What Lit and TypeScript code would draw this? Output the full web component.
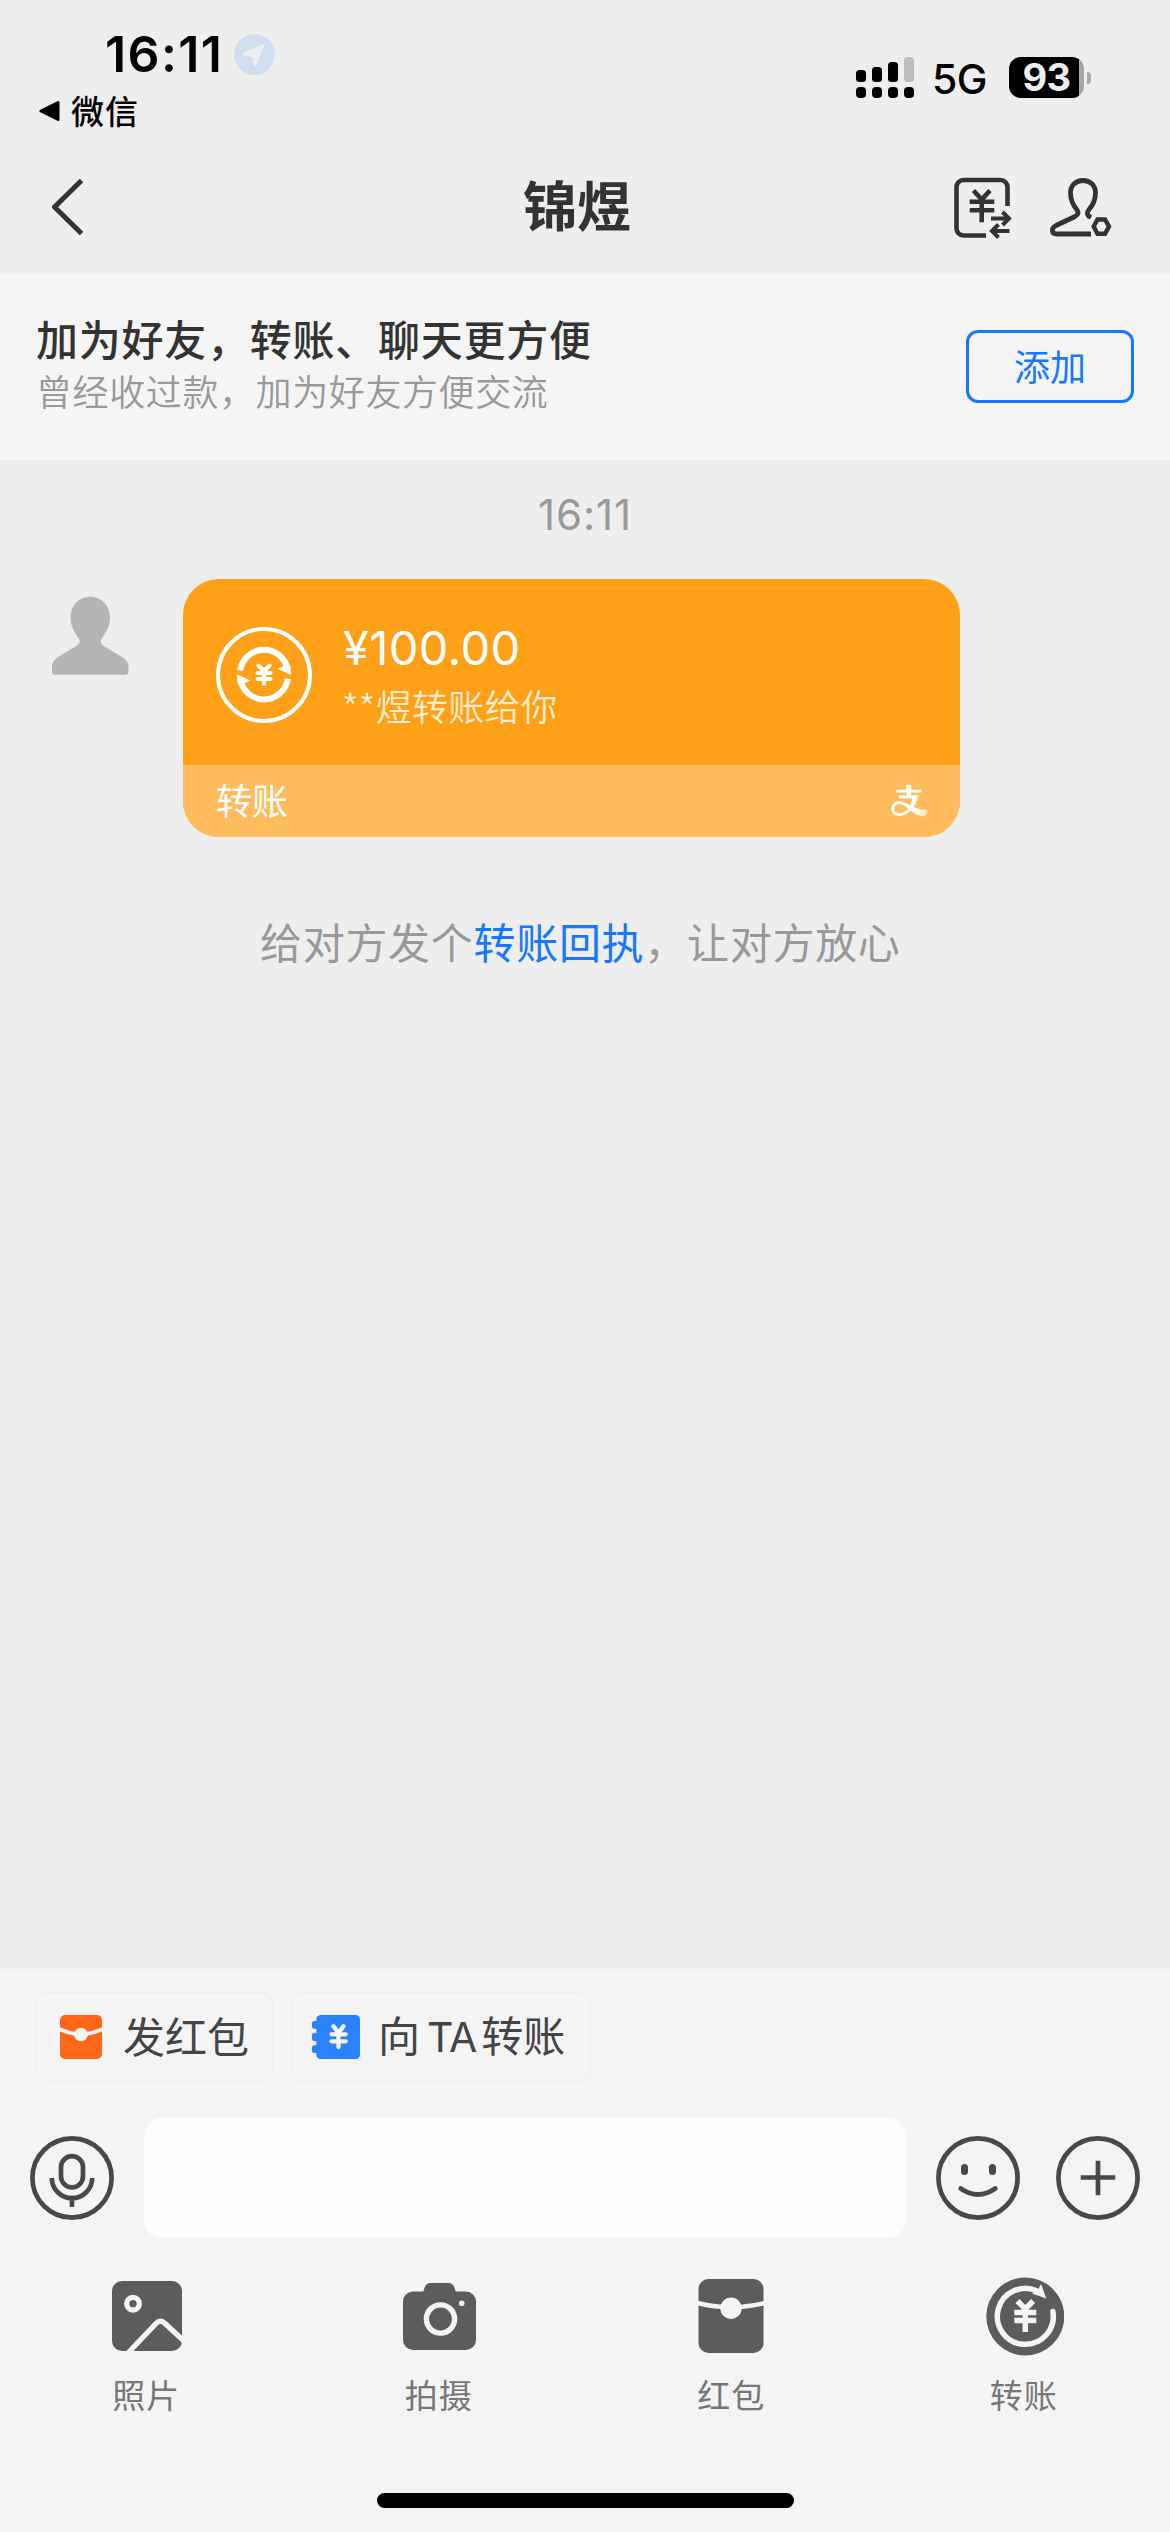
import { LitElement, html, css, svg } from "lit";
import { customElement } from "lit/decorators.js";

const billIcon = html`<svg width="62" height="64" viewBox="0 0 62 64" fill="none" stroke="#333" stroke-width="4.6">
  <path d="M55.5 31V12a7 7 0 0 0-7-7H11.5a7 7 0 0 0-7 7v41.500a7 7 0 0 0 7 7H34" />
  <path d="M21.500 15.500L29.700 24.500L38 15.500M17.700 26.700H42.300M17.700 35.300H42.300M29.700 24V47.300" />
  <path d="M39 43.500H57.500M50.500 37L57 43.500L50.500 50M57.500 56H40M46.500 49.500L40 56L46.500 62.500" stroke-width="4" />
</svg>`;

const userIcon = html`<svg width="66" height="64" viewBox="0 0 66 64" fill="none" stroke="#333" stroke-width="4.8">
  <path d="M43 42.500C38.500 40 38.500 37.500 41 34.500C45 30 47.500 26 47.500 18C47.500 10 42 5.500 35 5.500S22.500 10 22.500 18C22.500 26 25 30 28.700 34.500C31 37.500 30.500 39.500 27 41.500L8 50.500C2.500 53.500 3.500 59 9 59H43" />
  <path d="M45.700 51.500L49.500 44.500H57L61 51.500L57 58.800H49.500Z" stroke-width="4.400" />
</svg>`;

const micIcon = html`<svg width="84" height="84" viewBox="0 0 84 84" fill="none" stroke="#484848" stroke-width="4.700">
  <circle cx="42" cy="42" r="39.600" />
  <rect x="31" y="20.100" width="22" height="31.200" rx="11" />
  <path d="M21.800 42A20.200 20.200 0 0 0 62.200 42M42 62V71" />
</svg>`;

const smileIcon = html`<svg width="84" height="84" viewBox="0 0 84 84" fill="none" stroke="#484848" stroke-width="4.700">
  <circle cx="42" cy="42" r="39.600" />
  <path d="M28.500 31.500V35.500M56.500 31.500V35.500" stroke-width="7" stroke-linecap="round" />
  <path d="M24.700 52.500Q42 64.500 59.300 52.500" stroke-linecap="round" />
</svg>`;

const plusIcon = html`<svg width="84" height="84" viewBox="0 0 84 84" fill="none" stroke="#484848" stroke-width="4.700">
  <circle cx="42" cy="42" r="39.600" />
  <path d="M42 24.700V59.300M24.700 41.500H59.300" />
</svg>`;

const packetChip = html`<svg width="42" height="44" viewBox="0 0 42 44">
  <rect width="42" height="44" rx="5" fill="#ff6618" />
  <path d="M-2 13.500Q10 19 21 19.300Q32 19 44 13.500" fill="none" stroke="#f4f4f4" stroke-width="4" />
  <circle cx="21" cy="19.500" r="6.800" fill="#f4f4f4" />
</svg>`;

const ledgerChip = html`<svg width="48" height="44" viewBox="0 0 48 44">
  <rect x="4.300" width="43.700" height="44" rx="4.500" fill="#2a82ff" />
  <g fill="#2a82ff">
    <rect y="6" width="9" height="7.700" rx="2" /><rect y="18" width="9" height="8" rx="2" /><rect y="30.300" width="9" height="7.700" rx="2" />
  </g>
  <path d="M21.500 11.300L26.500 18L31.500 11.300M19.500 19.300H33.700M19.500 26.300H33.700M26.500 18V32" fill="none" stroke="#f4f4f4" stroke-width="4.300" stroke-linecap="round" />
</svg>`;

const cycleHalf = svg`<path d="M24.200 43.500A24 24 0 0 1 71.500 42" stroke-width="6"/>
  <path d="M74.500 39L75 48L61.500 41.800L70 38Z" fill="#fff" stroke="none"/>`;
const cycleOther = svg`<path d="M24.200 43.500A24 24 0 0 1 71.500 42" stroke-width="6"/>
  <path d="M74.500 39L75 48L61.500 41.800L70 38Z" fill="#fff" stroke="none"/>`;

const tools = [
  {
    label: "照片",
    art: svg`<rect x="6" y="5" width="70" height="70" rx="10" fill="#5c5c5c"/>
      <g fill="none" stroke="#f4f4f4" stroke-width="5.300"><circle cx="27" cy="27.700" r="6.300"/>
      <path d="M21 78L50 47.500Q54 43.300 58.500 47L79 66"/></g>`,
  },
  {
    label: "拍摄",
    art: svg`<rect x="4" y="15.500" width="73" height="58.500" rx="10" fill="#5c5c5c"/>
      <path d="M23 17Q24.500 16 25 13.500Q26.500 7 31.500 7H50Q54.500 7 56 13.500Q56.500 16 58 17Z" fill="#5c5c5c"/>
      <circle cx="41.500" cy="43" r="14.100" fill="none" stroke="#f4f4f4" stroke-width="5.400"/>
      <circle cx="62.700" cy="27.300" r="2.800" fill="#f4f4f4"/>`,
  },
  {
    label: "红包",
    art: svg`<rect x="7.500" y="3" width="65" height="74" rx="10" fill="#5c5c5c"/>
      <path d="M6 27Q18 30 31 31Q40 32 49 31Q62 30 74 27" fill="none" stroke="#f4f4f4" stroke-width="4.500"/>
      <circle cx="40" cy="32.300" r="10.700" fill="#f4f4f4"/>`,
  },
  {
    label: "转账",
    art: svg`<circle cx="41.300" cy="40.500" r="39" fill="#5c5c5c"/>
      <g fill="none" stroke="#f4f4f4" stroke-width="5.500">
      <path d="M68.900 35.500A28 28 0 1 1 54 15.400" stroke-linecap="round"/>
      <path d="M33.500 25L41.300 33L49.100 25M30.300 36.500H52.300M30.300 44.500H52.300M41.300 32V56"/></g>
      <path d="M57 8L62.300 22.500L48 17.500L54 14Z" fill="#f4f4f4"/>`,
  },
];

@customElement("app-root")
export class AppRoot extends LitElement {
  static styles = css`
    :host {
      display: block;
    }
    * {
      box-sizing: border-box;
    }
    svg {
      display: block;
      flex: none;
    }
    .page {
      width: 1170px;
      height: 2532px;
      display: flex;
      flex-direction: column;
      background: #eee;
      color: #333;
      font-family: "Noto Sans CJK SC", sans-serif;
      white-space: nowrap;
      overflow: hidden;
    }
    .status {
      height: 140px;
      display: flex;
      justify-content: space-between;
      align-items: flex-start;
      color: #000;
    }
    .left {
      padding-top: 34px;
      display: grid;
      grid-template-rows: 41px 34px;
      row-gap: 19px;
    }
    .clock {
      display: grid;
      grid-template-columns: 129px 41px;
      align-items: center;
      padding-left: 105px;
    }
    .time {
      font: 600 50px/41px Inter, sans-serif;
      letter-spacing: 1.4px;
    }
    .back-app {
      display: flex;
      align-items: center;
      gap: 11px;
      padding-left: 39px;
      font-size: 33px;
      line-height: 34px;
      font-weight: 500;
      letter-spacing: 1px;
    }
    .back-label {
      padding-bottom: 3px;
    }
    .right {
      display: flex;
      align-items: center;
      padding: 57px 79px 0 0;
      height: 98px;
    }
    .net {
      width: 75px;
      padding: 3px 0 0 18px;
      margin-right: 20px;
      font: 500 41px/41px Inter, sans-serif;
      letter-spacing: -0.5px;
    }
    .battery {
      width: 75px;
      height: 41px;
      border-radius: 12px;
      background: linear-gradient(90deg, #000 70px, #a6a6a6 70px);
      color: #eee;
      font: 700 38px/41px Inter, sans-serif;
      text-align: center;
      letter-spacing: -0.5px;
    }
    .nub {
      width: 4px;
      height: 12px;
      margin-left: 3px;
      border-radius: 0 5px 5px 0;
      background: #aaa;
    }
    .nav {
      height: 134px;
      display: grid;
      grid-template-columns: 473px auto 1fr;
      align-items: center;
      padding-left: 50px;
    }
    .title {
      font-size: 54px;
      line-height: 60px;
      font-weight: 700;
      padding-bottom: 6px;
    }
    .nav-actions {
      display: flex;
      justify-content: flex-end;
      gap: 34px;
      padding-right: 56px;
    }
    .banner {
      height: 186px;
      background: #f5f5f5;
      display: flex;
      justify-content: space-between;
      align-items: flex-start;
      padding: 42px 36px 0;
    }
    .banner-title {
      font-size: 42px;
      line-height: 44px;
      letter-spacing: 0.75px;
      font-weight: 500;
    }
    .banner-sub {
      margin-top: 10px;
      font-size: 36px;
      line-height: 40px;
      letter-spacing: 0.6px;
      color: #999;
      font-weight: 350;
    }
    .add {
      margin-top: 14px;
      width: 168px;
      height: 73px;
      border: 3px solid #1677ff;
      border-radius: 12px;
      color: #1677ff;
      font-size: 36px;
      line-height: 65px;
      text-align: center;
    }
    .chat {
      flex: 1;
      display: flex;
      flex-direction: column;
    }
    .stamp {
      margin-top: 34px;
      text-align: center;
      font: 400 42px/42px Inter, sans-serif;
      letter-spacing: 0.9px;
      color: #999;
    }
    .message {
      display: flex;
      gap: 33px;
      margin: 43px 0 0 30px;
    }
    .card {
      width: 777px;
      height: 258px;
      border-radius: 36px;
      overflow: hidden;
      color: #fff;
      background: #ffa019;
    }
    .card-main {
      height: 186px;
      display: flex;
      align-items: center;
      gap: 30px;
      padding: 6px 33px 0;
    }
    .amount {
      padding-left: 1px;
      font: 400 47px/46px Inter, sans-serif;
      letter-spacing: 0.4px;
    }
    .from {
      margin-top: 14px;
      font-size: 36px;
      line-height: 40px;
      letter-spacing: 0.3px;
      color: #ffecd1;
      font-weight: 350;
    }
    .card-foot {
      height: 72px;
      display: flex;
      align-items: center;
      justify-content: space-between;
      padding: 0 33px 0 33px;
      background: #ffbc5e;
      font-size: 36px;
      line-height: 68px;
    }
    .foot-label {
      padding-bottom: 4px;
    }
    .tip {
      margin-top: 82px;
      padding-left: 260px;
      font-size: 42px;
      line-height: 44px;
      letter-spacing: 0.7px;
      color: #999;
    }
    .link {
      color: #1677ff;
    }
    .dock {
      height: 563px;
      background: #f4f4f4;
      display: flex;
      flex-direction: column;
    }
    .chips {
      display: flex;
      gap: 18px;
      padding: 23px 36px 0;
    }
    .chip {
      height: 90px;
      display: flex;
      align-items: center;
      border: 1px solid #ededed;
      border-radius: 12px;
      font-size: 42px;
      line-height: 80px;
      color: #444;
    }
    .chip-text {
      padding-bottom: 4px;
    }
    .packet {
      width: 237px;
      gap: 21px;
      padding-left: 23px;
    }
    .ledger {
      width: 300px;
      gap: 18px;
      padding-left: 20px;
    }
    .latin {
      margin: 0 5px 0 7px;
      font-family: Inter, sans-serif;
      font-size: 41px;
      letter-spacing: -1px;
    }
    .compose {
      display: flex;
      align-items: center;
      padding: 36px 30px 0;
    }
    .input {
      width: 762px;
      height: 120px;
      margin: 0 30px;
      border-radius: 18px;
      background: #fdfdfd;
    }
    .plus {
      margin-left: 36px;
    }
    .tools {
      display: grid;
      grid-template-columns: repeat(4, 1fr);
      padding-top: 38px;
    }
    .tool {
      display: flex;
      flex-direction: column;
      align-items: center;
      gap: 18px;
      font-size: 33px;
      line-height: 40px;
      letter-spacing: 1px;
      color: #777;
    }
    .home {
      width: 417px;
      height: 15px;
      margin: auto auto 24px;
      border-radius: 8px;
      background: #000;
    }
  `;

  render() {
    return html`<div class="page">
      <div class="status">
        <div class="left">
          <div class="clock">
            <span class="time">16:11</span>
            <svg width="41" height="41" viewBox="0 0 41 41">
              <circle cx="20.500" cy="20.500" r="20.500" fill="#cfdff0" />
              <path d="M10 20L28.500 12L21 30.500L19.500 22L10 20Z" fill="#eee" stroke="#eee" stroke-width="3" stroke-linejoin="round" />
            </svg>
          </div>
          <div class="back-app">
            <svg width="21" height="22" viewBox="0 0 21 22">
              <path d="M2 11L19 2.500V19.500Z" stroke="#000" stroke-width="3" stroke-linejoin="round" />
            </svg>
            <span class="back-label">微信</span>
          </div>
        </div>
        <div class="right">
          <svg width="58" height="41" viewBox="0 0 58 41">
            <rect y="13" width="10" height="12" rx="3.500" />
            <rect x="16" y="10" width="10" height="15" rx="3.500" />
            <rect x="32" y="5" width="10" height="20" rx="3.500" />
            <rect x="48" width="10" height="25" rx="3.500" fill="#bdbdbd" />
            <rect y="30" width="10" height="11" rx="4" />
            <rect x="16" y="30" width="10" height="11" rx="4" />
            <rect x="32" y="30" width="10" height="11" rx="4" />
            <rect x="48" y="30" width="10" height="11" rx="4" />
          </svg>
          <span class="net">5G</span>
          <div class="battery">93</div>
          <div class="nub"></div>
        </div>
      </div>

      <div class="nav">
        <svg width="36" height="56" viewBox="0 0 36 56" fill="none" stroke="#333" stroke-width="5">
          <path d="M31.500 1.500L4.500 28L31.500 54.500" stroke-linejoin="round" />
        </svg>
        <div class="title">锦煜</div>
        <div class="nav-actions">${billIcon}${userIcon}</div>
      </div>

      <div class="banner">
        <div>
          <div class="banner-title">加为好友，转账、聊天更方便</div>
          <div class="banner-sub">曾经收过款，加为好友方便交流</div>
        </div>
        <div class="add">添加</div>
      </div>

      <div class="chat">
        <div class="stamp">16:11</div>
        <div class="message">
          <svg width="120" height="120" viewBox="0 0 120 120">
            <path fill="#b5b5b5" d="M60 17.700C71 17.700 80 26 80 38.500C80 46 77 52 71.500 60C70 63 71 64.500 73 66.500L91 77.500C97 81 98.500 84 98.500 88V92.500Q98.500 95.700 95.500 95.700H25Q22 95.700 22 92.500V88C22 84 24 81 29 77.500L47 66.500C49.500 64.500 50.500 63 49 60C43.500 52 40.500 46 40.500 38.500C40.500 26 49 17.700 60 17.700Z" />
          </svg>
          <div class="card">
            <div class="card-main">
              <svg width="96" height="96" viewBox="0 0 96 96" fill="none" stroke="#fff">
                <circle cx="48" cy="48" r="46" stroke-width="4" />
                <g>${cycleHalf}</g>
                <g transform="rotate(180 48 47.600)">${cycleOther}</g>
                <path d="M42.500 38.500L48 44L53.500 38.500M41.500 46H54.500M41.500 52H54.500M48 44V57" stroke-width="4" stroke-linecap="round" />
              </svg>
              <div>
                <div class="amount">¥100.00</div>
                <div class="from">**煜转账给你</div>
              </div>
            </div>
            <div class="card-foot">
              <span class="foot-label">转账</span>
              <svg width="36" height="32" viewBox="0 0 36 32" fill="none" stroke="#fff">
                <defs>
                  <linearGradient id="fade" x1="0" x2="1">
                    <stop offset="0.400" stop-color="#fff" />
                    <stop offset="1" stop-color="#fff" stop-opacity="0.550" />
                  </linearGradient>
                </defs>
                <path d="M17.700 0V12" stroke-width="4.800" />
                <path d="M5.300 6.200H30.300" stroke-width="2.800" />
                <path d="M8 12H25" stroke-width="2.800" />
                <path d="M24.800 11.500C23 19.500 18 29.300 8.500 29.600C-0.500 29.600 0 18.500 7.500 17.800C12 17.600 16 20 20 22.500" stroke-width="2.900" />
                <path d="M22 10.600H27.300C26 16 24.500 19.500 22 22.500L18 26L20 20Z" fill="#fff" stroke="none" />
                <path d="M14 18.500C20 21 27 24.500 36 25Q36.200 29.500 34 31.500C27 31.500 21 27 14 21Z" fill="url(#fade)" stroke="none" />
              </svg>
            </div>
          </div>
        </div>
        <div class="tip">给对方发个<span class="link">转账回执</span>，让对方放心</div>
      </div>

      <div class="dock">
        <div class="chips">
          <div class="chip packet">${packetChip}<span class="chip-text">发红包</span></div>
          <div class="chip ledger">${ledgerChip}<span class="chip-text">向<span class="latin">TA</span>转账</span></div>
        </div>
        <div class="compose">
          ${micIcon}
          <div class="input"></div>
          ${smileIcon}
          <div class="plus">${plusIcon}</div>
        </div>
        <div class="tools">
          ${tools.map(
            (t) => html`<div class="tool">
              <svg width="80" height="80" viewBox="0 0 80 80">${t.art}</svg>
              <span>${t.label}</span>
            </div>`
          )}
        </div>
        <div class="home"></div>
      </div>
    </div>`;
  }
}
